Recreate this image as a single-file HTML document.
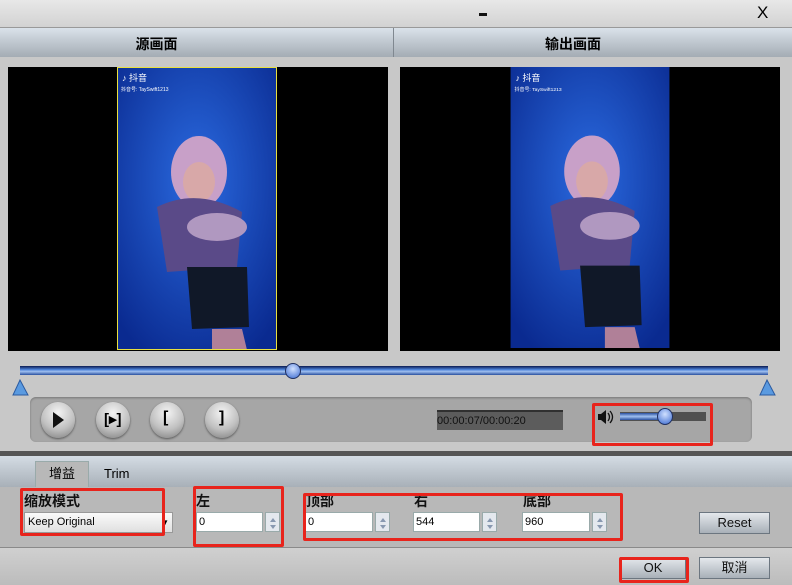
<!DOCTYPE html>
<html><head><meta charset="utf-8"><style>
*{margin:0;padding:0;box-sizing:border-box}
body{width:792px;height:585px;overflow:hidden;background:#c8c8c8;position:relative;font-family:"Liberation Sans","Noto Sans CJK SC",sans-serif}
.a{position:absolute}
.red{position:absolute;border:3px solid #e8241c;border-radius:2px}
.btn{position:absolute;background:linear-gradient(#e4e8ec,#a8b0b8);border:1px solid #6c7680;font-size:13px;text-align:center;line-height:20px;color:#111}
.inp{position:absolute;background:#fff;border:1px solid #9aa;height:20px;font-size:11px;line-height:18px;padding-left:2px}
.spin{position:absolute;width:15px;height:20px;background:#e4e8ee;border:1px solid #9aa}
.spin:before{content:"";position:absolute;left:4px;top:2px;border:3px solid transparent;border-bottom:4px solid #8898b0}
.spin:after{content:"";position:absolute;left:4px;top:12px;border:3px solid transparent;border-top:4px solid #8898b0}
.lbl{position:absolute;font-weight:bold;font-size:14px;color:#111}
.cb{position:absolute;width:34px;height:36px;border-radius:50%;background:radial-gradient(circle at 50% 30%,#f4f4f4,#c0c0c0 55%,#7a7a7a);box-shadow:0 1px 2px #555}
</style></head><body>
<div class="a" style="left:0;top:0;width:792px;height:28px;background:linear-gradient(#e8e8e8,#d2d2d2);border-bottom:1px solid #999"></div>
<div class="a" style="left:479px;top:13px;width:8px;height:3px;background:#111"></div>
<div class="a" style="left:757px;top:3px;font-size:17px">X</div>
<div class="a" style="left:0;top:28px;width:792px;height:29px;background:linear-gradient(#dae2ea,#a4acb4)"></div>
<div class="a" style="left:393px;top:28px;width:1px;height:29px;background:#808890"></div>
<div class="a" style="left:0;top:34px;width:313px;text-align:center;font-size:14px;font-weight:bold">源画面</div>
<div class="a" style="left:394px;top:34px;width:358px;text-align:center;font-size:14px;font-weight:bold">输出画面</div>

<div class="a" style="left:8px;top:67px;width:380px;height:284px;background:#000"></div>
<div class="a" style="left:400px;top:67px;width:380px;height:284px;background:#000"></div>
<svg class="a" style="left:117px;top:67px" width="160" height="283" viewBox="0 0 160 283"><defs><radialGradient id="g" cx="50%" cy="40%" r="70%"><stop offset="0" stop-color="#2a6ae0"/><stop offset="1" stop-color="#0a2a90"/></radialGradient></defs><rect width="160" height="283" fill="url(#g)"/><ellipse cx="82" cy="105" rx="28" ry="36" fill="#c8a0c8"/><ellipse cx="82" cy="115" rx="16" ry="20" fill="#d8a8a8"/><path d="M40 140 Q80 120 125 145 L120 200 L50 205 Z" fill="#5a4a88"/><ellipse cx="100" cy="160" rx="30" ry="14" fill="#b098c0"/><path d="M70 200 L130 200 L132 260 L75 262 Z" fill="#101828"/><path d="M95 262 L125 262 L130 283 L95 283Z" fill="#b08098"/><text x="5" y="14" fill="#fff" font-size="9">♪ 抖音</text><text x="4" y="24" fill="#fff" font-size="5">抖音号: TaySwift1213</text><rect x="0.5" y="0.5" width="159" height="282" fill="none" stroke="#e8e040"/></svg>
<svg class="a" style="left:510px;top:67px" width="160" height="281" viewBox="0 0 160 283"><rect width="160" height="283" fill="url(#g)"/><ellipse cx="82" cy="105" rx="28" ry="36" fill="#c8a0c8"/><ellipse cx="82" cy="115" rx="16" ry="20" fill="#d8a8a8"/><path d="M40 140 Q80 120 125 145 L120 200 L50 205 Z" fill="#5a4a88"/><ellipse cx="100" cy="160" rx="30" ry="14" fill="#b098c0"/><path d="M70 200 L130 200 L132 260 L75 262 Z" fill="#101828"/><path d="M95 262 L125 262 L130 283 L95 283Z" fill="#b08098"/><text x="5" y="14" fill="#fff" font-size="9">♪ 抖音</text><text x="4" y="24" fill="#fff" font-size="5">抖音号: TaySwift1213</text></svg>

<div class="a" style="left:20px;top:366px;width:748px;height:9px;background:linear-gradient(#0a1a50,#4a80d8 40%,#a0c0f0 60%,#2a50a0)"></div>
<div class="a" style="left:285px;top:363px;width:16px;height:16px;border-radius:50%;background:radial-gradient(circle at 50% 35%,#d0e0ff,#3a6ad0);border:1px solid #203060"></div>
<svg class="a" style="left:12px;top:379px" width="784" height="18"><polygon points="8,1 1,16 16,16" fill="#5a9ae0" stroke="#2a5aa0"/><polygon points="755,1 748,16 763,16" fill="#5a9ae0" stroke="#2a5aa0"/></svg>

<div class="a" style="left:30px;top:397px;width:722px;height:45px;background:#a6a6a6;border-radius:6px;box-shadow:inset 0 1px 2px #777"></div>
<div class="cb" style="left:41px;top:402px"></div><div class="a" style="left:53px;top:412px;border:8px solid transparent;border-left:11px solid #111;border-right:0"></div>
<div class="cb" style="left:96px;top:402px"></div><div class="a" style="left:104px;top:410px;font-size:15px;font-weight:bold">[▸]</div>
<div class="cb" style="left:150px;top:402px"></div><div class="a" style="left:163px;top:409px;font-size:16px;font-weight:bold">[</div>
<div class="cb" style="left:205px;top:402px"></div><div class="a" style="left:219px;top:409px;font-size:16px;font-weight:bold">]</div>
<div class="a" style="left:437px;top:410px;width:126px;height:20px;background:#5c5c5c;border-top:2px solid #303030;font-size:11px;line-height:18px;color:#111">00:00:07/00:00:20</div>
<svg class="a" style="left:597px;top:409px" width="20" height="16"><path d="M1 5 H4 L9 1 V15 L4 11 H1 Z" fill="#111"/><path d="M11 4 Q14 8 11 12" stroke="#111" stroke-width="1.3" fill="none"/><path d="M13 2 Q18 8 13 14" stroke="#111" stroke-width="1.3" fill="none"/></svg>
<div class="a" style="left:620px;top:412px;width:86px;height:9px;background:#505050"></div>
<div class="a" style="left:620px;top:413px;width:44px;height:7px;background:linear-gradient(#2a50a0,#a0c0f0,#2a50a0)"></div>
<div class="a" style="left:657px;top:408px;width:16px;height:17px;border-radius:50%;background:radial-gradient(circle at 50% 35%,#d0e0ff,#3a6ad0);border:1px solid #203060"></div>
<div class="red" style="left:592px;top:403px;width:121px;height:43px"></div>

<div class="a" style="left:0;top:451px;width:792px;height:5px;background:#555"></div>
<div class="a" style="left:0;top:456px;width:792px;height:31px;background:linear-gradient(#d4dce4,#a8b0b8)"></div>
<div class="a" style="left:35px;top:461px;width:54px;height:26px;background:#b8b8b8;border:1px solid #9aa;border-bottom:0;font-size:13px;text-align:center;line-height:24px">增益</div>
<div class="a" style="left:104px;top:466px;font-size:13px">Trim</div>
<div class="a" style="left:0;top:487px;width:792px;height:61px;background:#b8b8b8;border-bottom:1px solid #8a8a8a"></div>
<div class="a" style="left:0;top:548px;width:792px;height:37px;background:linear-gradient(#d0d0d0,#bcbcbc)"></div>

<div class="lbl" style="left:24px;top:491px">缩放模式</div>
<div class="a" style="left:24px;top:512px;width:149px;height:21px;background:linear-gradient(#fafafa,#e0e0e0);border:1px solid #999;font-size:11px;line-height:19px;padding-left:3px">Keep Original<span style="position:absolute;right:3px;font-size:8px">▼</span></div>
<div class="lbl" style="left:196px;top:491px">左</div>
<div class="inp" style="left:196px;top:512px;width:67px">0</div><div class="spin" style="left:265px;top:512px"></div>
<div class="lbl" style="left:306px;top:491px">顶部</div>
<div class="inp" style="left:305px;top:512px;width:68px">0</div><div class="spin" style="left:375px;top:512px"></div>
<div class="lbl" style="left:414px;top:491px">右</div>
<div class="inp" style="left:413px;top:512px;width:67px">544</div><div class="spin" style="left:482px;top:512px"></div>
<div class="lbl" style="left:523px;top:491px">底部</div>
<div class="inp" style="left:522px;top:512px;width:68px">960</div><div class="spin" style="left:592px;top:512px"></div>
<div class="btn" style="left:699px;top:512px;width:71px;height:22px">Reset</div>
<div class="btn" style="left:620px;top:557px;width:66px;height:22px">OK</div>
<div class="btn" style="left:699px;top:557px;width:71px;height:22px">取消</div>

<div class="red" style="left:20px;top:488px;width:145px;height:48px"></div>
<div class="red" style="left:193px;top:486px;width:91px;height:61px"></div>
<div class="red" style="left:303px;top:493px;width:320px;height:48px"></div>
<div class="red" style="left:619px;top:557px;width:70px;height:26px"></div>
</body></html>
